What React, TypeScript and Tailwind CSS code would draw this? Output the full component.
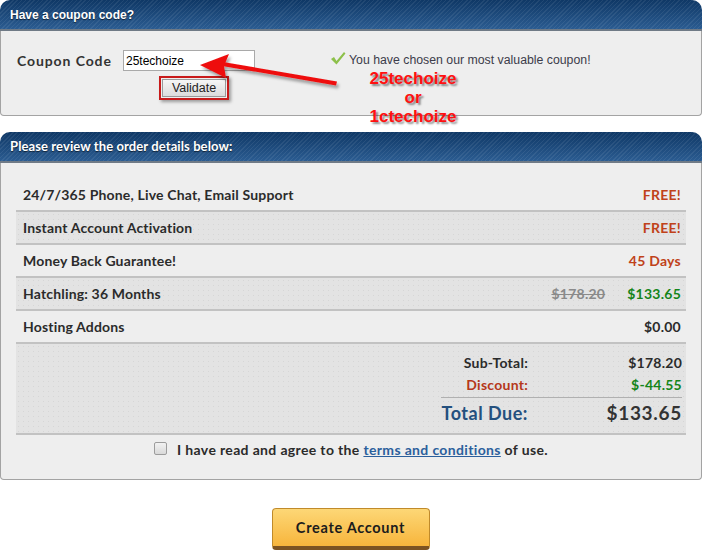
import React from "react";

const headerCls =
  "h-[31px] rounded-t-[10px] flex items-center pl-[10px] text-white font-bold text-[12px] [text-shadow:0_1px_1px_rgba(0,0,0,0.6)] bg-[image:repeating-linear-gradient(135deg,rgba(255,255,255,0.07)_0px,rgba(255,255,255,0.07)_1px,transparent_1px,transparent_3px),linear-gradient(to_bottom,#0f3866,#2b5c91)] border-b-2 border-[#6f7a86]";

const rowFont = "font-['Lato','Open_Sans',sans-serif]";

function Row({
  label,
  shaded,
  children,
}: {
  label: string;
  shaded?: boolean;
  children: React.ReactNode;
}) {
  return (
    <div
      className={
        "h-[33px] flex items-center justify-between pl-[7px] pr-[5px] border-b-2 border-[#c2c2c2] " +
        (shaded
          ? "bg-[#e3e3e3] bg-[image:radial-gradient(#d6d6d6_0.6px,transparent_0.8px)] bg-[length:5px_5px]"
          : "")
      }
    >
      <span className="text-[14px] font-bold text-[#2b2b2b] tracking-[0.17px]">{label}</span>
      <div className="flex items-center gap-[22px] text-[14px] font-bold tracking-[0.25px]">{children}</div>
    </div>
  );
}

export default function App() {
  return (
    <div className="w-[702px] h-[551px] bg-white relative overflow-hidden font-['Liberation_Sans',Arial,sans-serif]">
      {/* Panel 1 */}
      <div className="w-[702px]">
        <div className={headerCls + " font-['Liberation_Sans',Arial,sans-serif] text-[12px]"}>
          Have a coupon code?
        </div>
        <div className="h-[85px] bg-[#eeeeee] border-x border-b border-[#a3a3a3] rounded-b-[4px] pt-[19px]">
          <div className="flex items-center">
            <span className={"ml-[16px] w-[106px] text-[14px] font-bold text-[#333] tracking-[0.9px] " + rowFont}>
              Coupon Code
            </span>
            <div className="w-[132px] h-[21px] bg-white border border-[#a9a9a9] flex items-center pl-[2px] text-[12px] text-black">
              25techoize
            </div>
            <div className="ml-[75px] flex items-center text-[12.3px] text-[#3c3c4a]">
              <svg width="16" height="15" viewBox="0 0 16 15" className="mr-[3px] -mt-[5px]">
                <path d="M1 8 L4 6 L6.5 10 L14 1 L15.5 2.5 L6.5 13.5 Z" fill="#8dc04a" />
              </svg>
              You have chosen our most valuable coupon!
            </div>
          </div>
          <div className="ml-[158px] mt-[5px] w-[70px] h-[24px] border-2 border-[#c81a1a] p-[1px] shadow-[2px_2px_3px_rgba(0,0,0,0.35)]">
            <div className="w-full h-full bg-[image:linear-gradient(to_bottom,#f6f6f6,#dcdcdc)] border border-[#9a9a9a] flex items-center justify-center text-[12.5px] text-[#222]">
              Validate
            </div>
          </div>
        </div>
      </div>

      {/* Panel 2 */}
      <div className="w-[702px] mt-[16px]">
        <div className={headerCls + " " + rowFont + " text-[13px] tracking-[0.1px]"}>
          Please review the order details below:
        </div>
        <div className={"h-[317px] bg-[#eeeeee] border-x border-b border-[#a3a3a3] rounded-b-[4px] px-[15px] pt-[16px] " + rowFont}>
          <Row label="24/7/365 Phone, Live Chat, Email Support">
            <span className="text-[#c0421a]">FREE!</span>
          </Row>
          <Row label="Instant Account Activation" shaded>
            <span className="text-[#c0421a]">FREE!</span>
          </Row>
          <Row label="Money Back Guarantee!">
            <span className="text-[#c0421a]">45 Days</span>
          </Row>
          <Row label="Hatchling: 36 Months" shaded>
            <span className="text-[#8a8a8a] line-through">$178.20</span>
            <span className="text-[#15851a]">$133.65</span>
          </Row>
          <Row label="Hosting Addons">
            <span className="text-[#2b2b2b]">$0.00</span>
          </Row>
          <div className="h-[91px] border-b-2 border-[#c2c2c2] bg-[#e3e3e3] bg-[image:radial-gradient(#d6d6d6_0.6px,transparent_0.8px)] bg-[length:5px_5px] flex justify-end pr-[4px] pt-[7px]">
            <div className="w-[241px] text-[14px] font-bold tracking-[0.25px]">
              <div className="flex h-[22px] items-center">
                <span className="w-[87px] text-right text-[#2b2b2b]">Sub-Total:</span>
                <span className="flex-1 text-right text-[#2b2b2b]">$178.20</span>
              </div>
              <div className="flex h-[25px] items-center border-b border-[#b0b0b0] pb-[1px]">
                <span className="w-[87px] text-right text-[#b5371a]">Discount:</span>
                <span className="flex-1 text-right text-[#15851a]">$-44.55</span>
              </div>
              <div className="flex h-[30px] items-center">
                <span className="w-[87px] text-right text-[#24507e] text-[18px] tracking-[0.5px]">Total Due:</span>
                <span className="flex-1 text-right text-[#333] text-[19px] tracking-[0.7px]">$133.65</span>
              </div>
            </div>
          </div>
          <div className="flex items-center justify-center h-[29px] text-[14px] font-bold text-[#2b2b2b] tracking-[0.35px]">
            <span className="w-[13px] h-[13px] rounded-[2px] border border-[#9c9c9c] bg-[image:linear-gradient(to_bottom,#f2f2f2,#d9d9d9)] mr-[10px] -mt-[3px]" />
            <span>
              I have read and agree to the{" "}
              <span className="text-[#2b5f9c] underline">terms and conditions</span> of use.
            </span>
          </div>
        </div>
      </div>

      {/* Create account */}
      <div className="flex justify-center mt-[28px] pr-[1px]">
        <div
          className={
            "w-[158px] h-[42px] rounded-[4px] border border-[#c08a2a] border-b-[4px] border-b-[#7c5322] bg-[image:linear-gradient(to_bottom,#fdd776,#f7b53c)] flex items-center justify-center text-[14.5px] font-bold text-[#1c1c1c] tracking-[0.7px] " +
            rowFont
          }
        >
          Create Account
        </div>
      </div>

      {/* Annotation overlay */}
      <svg
        className="absolute left-0 top-0 pointer-events-none"
        width="702"
        height="140"
        viewBox="0 0 702 140"
      >
        <defs>
          <filter id="sh" x="-20%" y="-50%" width="140%" height="200%">
            <feDropShadow dx="2" dy="3" stdDeviation="1.5" floodColor="#000" floodOpacity="0.35" />
          </filter>
        </defs>
        <g filter="url(#sh)">
          <path d="M336 85.5 L222 66 L223 62 L337 81.5 Z" fill="#ee1111" />
          <path d="M200 65 L229 54 L224 66 L226 78 Z" fill="#ee1111" />
        </g>
      </svg>
      <div className="absolute left-[355px] top-[69px] w-[116px] text-center text-[17px] leading-[19px] font-bold text-[#ff1010] font-['Liberation_Sans',Arial,sans-serif] [text-shadow:2px_2px_2px_rgba(0,0,0,0.45)]">
        25techoize
        <br />
        or
        <br />
        1ctechoize
      </div>
    </div>
  );
}
